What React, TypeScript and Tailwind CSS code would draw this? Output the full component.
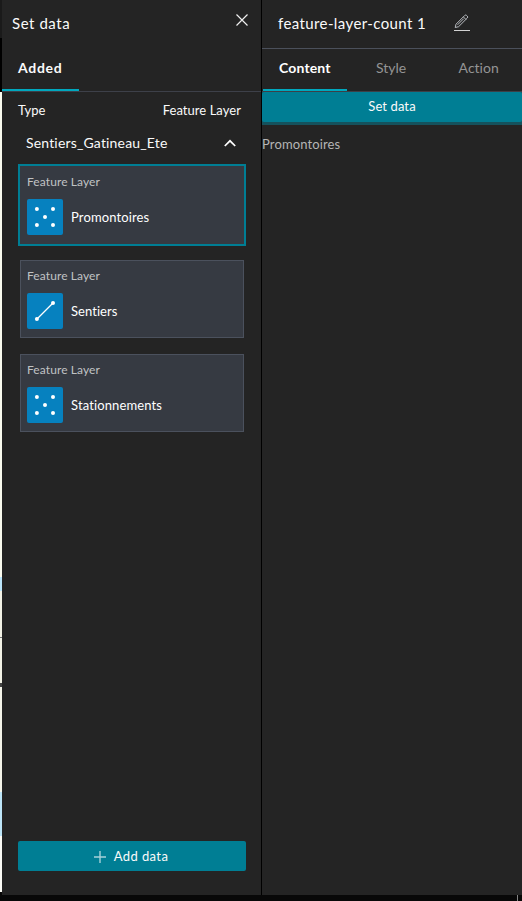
import React from 'react';

type LayerKind = 'point' | 'line';

function LayerIcon({ kind }: { kind: LayerKind }) {
  return (
    <span className="block h-9 w-9 rounded-[2px] bg-[#0681bf]">
      <svg width="36" height="36" viewBox="0 0 36 36" fill="#fff">
        {kind === 'point' ? (
          <>
            <circle cx="9.9" cy="9.9" r="2" />
            <circle cx="26" cy="9.9" r="2" />
            <circle cx="18" cy="18" r="2" />
            <circle cx="9.9" cy="26" r="2" />
            <circle cx="26" cy="26" r="2" />
          </>
        ) : (
          <>
            <path d="M10 26L26 10" stroke="#fff" strokeWidth="1.3" />
            <circle cx="9.9" cy="26" r="2" />
            <circle cx="26" cy="9.9" r="2" />
          </>
        )}
      </svg>
    </span>
  );
}

function LayerCard({ name, kind, spacing, selected = false }: { name: string; kind: LayerKind; spacing: string; selected?: boolean }) {
  return (
    <div
      className={
        selected
          ? 'h-[82px] w-[228px] shrink-0 border-2 border-[#007e94] bg-[#363a42] px-[7px] pt-2'
          : 'mx-[2px] mt-4 h-[78px] w-[224px] shrink-0 border border-[#4b515d] bg-[#363a42] px-1.5 pt-[7px] first:mt-0'
      }
    >
      <div className="h-4 whitespace-nowrap text-[12px] leading-4 tracking-[0.1px] text-[#c0c2c4]">Feature Layer</div>
      <div className="mt-[9px] flex items-center gap-2">
        <LayerIcon kind={kind} />
        <span className={`whitespace-nowrap text-[13px] leading-4 text-white ${spacing}`}>{name}</span>
      </div>
    </div>
  );
}

function MapEdge() {
  return (
    <div className="flex w-[2px] shrink-0 flex-col">
      <div className="h-[38px] bg-[#1a1a1a]" />
      <div className="h-[54px] bg-black" />
      <div className="h-[485px] bg-[#fafbef]" />
      <div className="h-[14px] bg-[#bce6fb]" />
      <div className="h-[46px] bg-[#f2f2e6]" />
      <div className="h-px bg-[#777]" />
      <div className="h-[45px] bg-[#f2f2e6]" />
      <div className="h-[4px] bg-[#444]" />
      <div className="h-[105px] bg-[#f5f5ea]" />
      <div className="h-[44px] bg-[#bde5f8]" />
      <div className="h-[56px] bg-[#fbfbf6]" />
      <div className="h-[3px] bg-[#080808]" />
    </div>
  );
}

function DataPanel() {
  return (
    <section className="flex w-[259px] shrink-0 flex-col bg-[#242424]">
      <header className="flex h-[46px] shrink-0 items-start justify-between pl-[10px] pr-[13px]">
        <h2 className="mt-[13px] whitespace-nowrap text-[15px] leading-5 tracking-[0.55px]">Set data</h2>
        <svg className="mt-[14px]" width="12" height="12" viewBox="0 0 12 12" stroke="#f0f0f0" strokeWidth="1.2">
          <path d="M.5.5l11 11M11.5.5l-11 11" />
        </svg>
      </header>
      <div className="h-[46px] shrink-0 border-b border-[#3d4049]">
        <div className="h-[45px] w-[77px] border-b-2 border-[#00a8be] pl-4 pt-[12px] text-[14px] font-bold leading-5 tracking-[0.7px]">
          Added
        </div>
      </div>
      <div className="flex h-[36px] shrink-0 items-center justify-between pl-4 pr-5 text-[13px] leading-4">
        <span>Type</span>
        <span className="whitespace-nowrap tracking-[0.05px]">Feature Layer</span>
      </div>
      <div className="flex h-[30px] shrink-0 items-center justify-between pl-6 pr-[25px]">
        <span className="whitespace-nowrap text-[14px] leading-5 tracking-[0.17px]">Sentiers_Gatineau_Ete</span>
        <svg width="12" height="8" viewBox="0 0 12 8" fill="none" stroke="#fff" strokeWidth="1.7">
          <path d="M.8 7L6 1.8 11.2 7" />
        </svg>
      </div>
      <div className="mt-[6px] flex flex-col px-4">
        <LayerCard name="Promontoires" kind="point" spacing="tracking-[0.12px]" selected />
        <div className="mt-[14px] flex flex-col">
          <LayerCard name="Sentiers" kind="line" spacing="tracking-[0.06px]" />
          <LayerCard name="Stationnements" kind="point" spacing="tracking-[0.12px]" />
        </div>
      </div>
      <button className="mx-4 mb-6 mt-auto flex h-[30px] w-[228px] items-center justify-center gap-2 rounded-[2px] bg-[#007e94] pr-[2px] pt-px text-[13px]">
        <svg width="12" height="12" viewBox="0 0 12 12" stroke="#a5d1d9" strokeWidth="1.4">
          <path d="M0 6h12M6 0v12" />
        </svg>
        <span className="whitespace-nowrap tracking-[0.4px]">Add data</span>
      </button>
    </section>
  );
}

function SettingsPanel() {
  return (
    <section className="w-[260px] shrink-0 bg-[#242424]">
      <header className="flex h-[49px] items-start border-b border-[#4b505b] pl-4">
        <h1 className="mt-[13px] w-[176px] whitespace-nowrap text-[15px] leading-5 tracking-[0.4px]">feature-layer-count 1</h1>
        <svg className="mt-[14px]" width="16" height="17" viewBox="0 0 16 17" fill="none" stroke="#b8bbc0" strokeWidth="1">
          <path d="M2 10.2L10.8 1.4Q11.7.5 12.7 1.5L13.3 2.1Q14.2 3.1 13.3 4L4.6 12.7 1.2 13.5zM9.4 2.9l2.6 2.6M3.6 10.8l6.1-6.1" />
          <path d="M0 16.5h16" stroke="#d2d2d2" />
        </svg>
      </header>
      <nav className="flex h-[43px] border-b border-[#3c4047] text-[14px] leading-5">
        <div className="ml-px h-[42px] w-[84px] border-b-2 border-[#00a8be] pt-[9px] text-center font-bold text-white tracking-[0.15px]">Content</div>
        <div className="w-[89px] pt-[9px] text-center text-[#949494]">Style</div>
        <div className="w-[87px] pt-[9px] text-center text-[#949494]">Action</div>
      </nav>
      <div className="h-[33px] bg-[#15525d]">
        <button className="block h-[30px] w-full rounded-[2px] bg-[#007e94] text-center text-[13px] tracking-[0.1px]">Set data</button>
      </div>
      <p className="mt-[11px] whitespace-nowrap text-[13px] leading-4 tracking-[0.12px] text-[#b5b5b5]">Promontoires</p>
    </section>
  );
}

export default function App() {
  return (
    <main className="flex h-[901px] w-[522px] flex-col overflow-hidden bg-[#080808] font-['Lato',sans-serif] text-[#fafafa] [font-variant-ligatures:none]">
      <div className="flex h-[895px] shrink-0 overflow-hidden">
        <MapEdge />
        <DataPanel />
        <div className="w-px shrink-0 bg-black" />
        <SettingsPanel />
      </div>
      <div className="flex h-[6px] justify-end">
        <div className="mr-1 w-px bg-[#858585]" />
      </div>
    </main>
  );
}
